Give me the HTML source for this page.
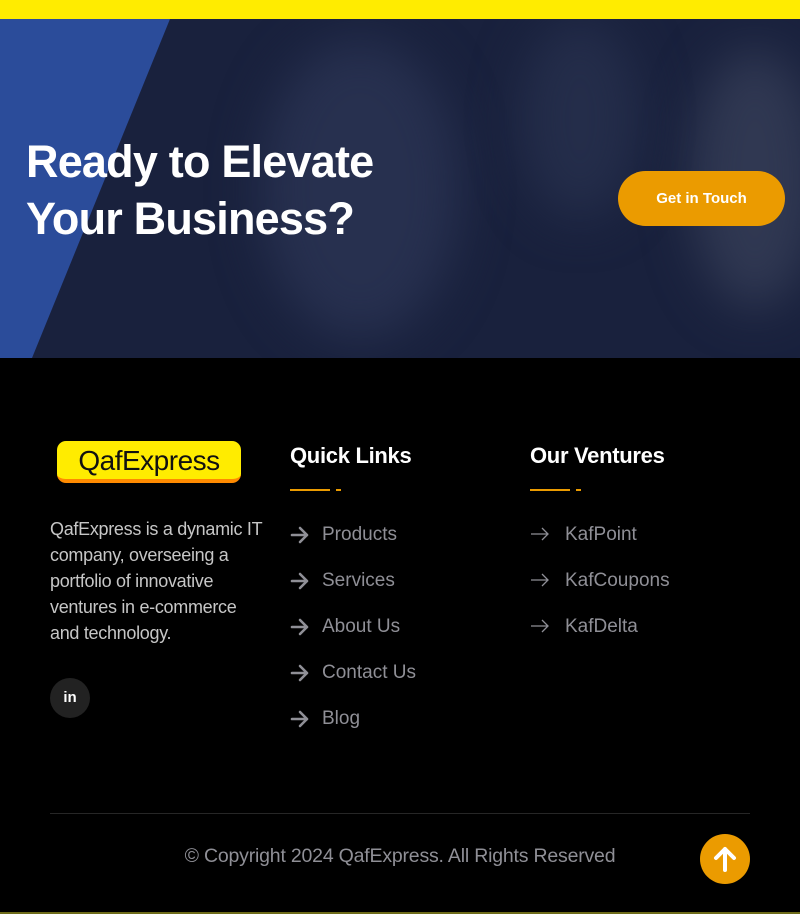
<!DOCTYPE html>
<html><head><meta charset="utf-8"><style>
*{margin:0;padding:0;box-sizing:border-box}
body{width:800px;height:914px;background:#000;font-family:"Liberation Sans",sans-serif;position:relative;overflow:hidden}
.top{position:absolute;left:0;top:0;width:800px;height:19px;background:#ffec00}
.hero{position:absolute;left:0;top:19px;width:800px;height:339px;background:#19213d;overflow:hidden}
.tri{position:absolute;left:0;top:0;width:800px;height:339px;background:#2b4c9a;clip-path:polygon(0 0,170px 0,32px 339px,0 339px)}
.blob{position:absolute;border-radius:50%;filter:blur(24px)}
.h1{position:absolute;left:26px;top:114px;color:#fff;font-size:45px;font-weight:bold;line-height:57px;letter-spacing:-0.8px}
.btn{position:absolute;left:618px;top:152px;width:167px;height:55px;border-radius:28px;background:#eb9b00;color:#fff;font-size:15px;font-weight:bold;text-align:center;line-height:55px}
.logo{position:absolute;left:57px;top:441px;width:184px;height:42px;border-radius:9px;background:#ffec00;border-bottom:4px solid #ff8a00;color:#111;font-size:28px;text-align:center;line-height:40px;letter-spacing:-0.5px}
.about{position:absolute;left:50px;top:516px;width:212px;color:#c6c6c6;font-size:18px;line-height:26px;letter-spacing:-0.3px}
.li{position:absolute;left:50px;top:678px;width:40px;height:40px;border-radius:50%;background:#222;color:#fff;font-size:15px;font-weight:bold;text-align:center;line-height:40px}
h3{position:absolute;color:#fff;font-size:22px;font-weight:bold;top:443px;letter-spacing:-0.3px}
.ul{position:absolute;top:489px;height:2px;width:40px;background:#eb9b00}
.ul2{position:absolute;top:489px;height:2px;width:5px;background:#eb9b00}
.it{position:absolute;color:#8f8f96;font-size:19px;height:24px;line-height:24px}
.it svg{position:absolute;left:0;top:3px}
.it b{font-weight:normal;position:absolute;white-space:nowrap}
.line{position:absolute;left:50px;top:813px;width:700px;height:1px;background:#262626}
.copy{position:absolute;left:0;width:800px;top:845px;text-align:center;color:#8f8f96;font-size:19.5px;letter-spacing:-0.2px}
.up{position:absolute;left:700px;top:834px;width:50px;height:50px;border-radius:50%;background:#eb9b00}
.bot{position:absolute;left:0;top:912px;width:800px;height:2px;background:#6e6c1a}
</style></head><body>
<div class="top"></div>
<div class="hero">
<div class="blob" style="left:260px;top:20px;width:200px;height:300px;background:#27304f"></div>
<div class="blob" style="left:690px;top:30px;width:130px;height:260px;background:#303852"></div>
<div class="blob" style="left:520px;top:0;width:120px;height:200px;background:#242d4a"></div>
<div class="tri"></div>
<div class="h1">Ready to Elevate<br>Your Business?</div>
<div class="btn">Get in Touch</div>
</div>
<div class="logo">QafExpress</div>
<div class="about">QafExpress is a dynamic IT company, overseeing a portfolio of innovative ventures in e-commerce and technology.</div>
<div class="li">in</div>
<h3 style="left:290px">Quick Links</h3>
<div class="ul" style="left:290px"></div><div class="ul2" style="left:336px"></div>
<h3 style="left:530px">Our Ventures</h3>
<div class="ul" style="left:530px"></div><div class="ul2" style="left:576px"></div>

<div class="it" style="left:290px;top:523px"><svg width="20" height="18" viewBox="0 0 20 18"><path d="M2 9h15M10 2l7 7-7 7" stroke="#8f8f96" stroke-width="2.6" fill="none" stroke-linecap="round" stroke-linejoin="round"/></svg><b style="left:32px">Products</b></div>
<div class="it" style="left:290px;top:569px"><svg width="20" height="18" viewBox="0 0 20 18"><path d="M2 9h15M10 2l7 7-7 7" stroke="#8f8f96" stroke-width="2.6" fill="none" stroke-linecap="round" stroke-linejoin="round"/></svg><b style="left:32px">Services</b></div>
<div class="it" style="left:290px;top:615px"><svg width="20" height="18" viewBox="0 0 20 18"><path d="M2 9h15M10 2l7 7-7 7" stroke="#8f8f96" stroke-width="2.6" fill="none" stroke-linecap="round" stroke-linejoin="round"/></svg><b style="left:32px">About Us</b></div>
<div class="it" style="left:290px;top:661px"><svg width="20" height="18" viewBox="0 0 20 18"><path d="M2 9h15M10 2l7 7-7 7" stroke="#8f8f96" stroke-width="2.6" fill="none" stroke-linecap="round" stroke-linejoin="round"/></svg><b style="left:32px">Contact Us</b></div>
<div class="it" style="left:290px;top:707px"><svg width="20" height="18" viewBox="0 0 20 18"><path d="M2 9h15M10 2l7 7-7 7" stroke="#8f8f96" stroke-width="2.6" fill="none" stroke-linecap="round" stroke-linejoin="round"/></svg><b style="left:32px">Blog</b></div>

<div class="it" style="left:530px;top:523px"><svg width="20" height="18" viewBox="0 0 20 18"><path d="M1 8h17M12 2l6 6-6 6" stroke="#8f8f96" stroke-width="1.3" fill="none"/></svg><b style="left:35px">KafPoint</b></div>
<div class="it" style="left:530px;top:569px"><svg width="20" height="18" viewBox="0 0 20 18"><path d="M1 8h17M12 2l6 6-6 6" stroke="#8f8f96" stroke-width="1.3" fill="none"/></svg><b style="left:35px">KafCoupons</b></div>
<div class="it" style="left:530px;top:615px"><svg width="20" height="18" viewBox="0 0 20 18"><path d="M1 8h17M12 2l6 6-6 6" stroke="#8f8f96" stroke-width="1.3" fill="none"/></svg><b style="left:35px">KafDelta</b></div>
<div class="line"></div>
<div class="copy">© Copyright 2024 QafExpress. All Rights Reserved</div>
<div class="up"><svg width="50" height="50" viewBox="0 0 50 50"><path d="M25 36V15M16 24l9-9 9 9" stroke="#fff" stroke-width="4" fill="none" stroke-linecap="round" stroke-linejoin="round"/></svg></div>
<div class="bot"></div>
</body></html>
